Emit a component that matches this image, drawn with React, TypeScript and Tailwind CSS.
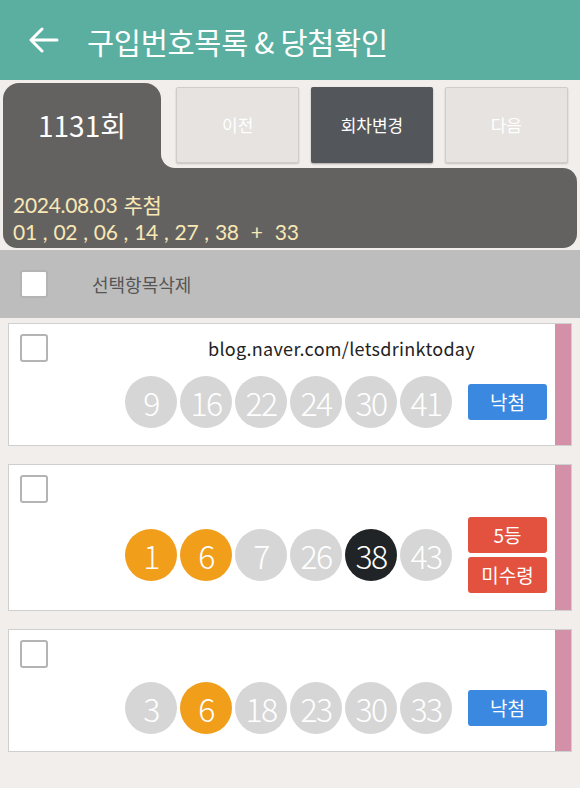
import React from 'react';

type Ball = { n: number; hit?: 'match' | 'bonus' };

interface Ticket {
  url?: string;
  balls: Ball[];
  badges: { label: string; color: 'blue' | 'red' }[];
}

const tickets: Ticket[] = [
  {
    url: 'blog.naver.com/letsdrinktoday',
    balls: [{ n: 9 }, { n: 16 }, { n: 22 }, { n: 24 }, { n: 30 }, { n: 41 }],
    badges: [{ label: '낙첨', color: 'blue' }],
  },
  {
    balls: [{ n: 1, hit: 'match' }, { n: 6, hit: 'match' }, { n: 7 }, { n: 26 }, { n: 38, hit: 'bonus' }, { n: 43 }],
    badges: [
      { label: '5등', color: 'red' },
      { label: '미수령', color: 'red' },
    ],
  },
  {
    balls: [{ n: 3 }, { n: 6, hit: 'match' }, { n: 18 }, { n: 23 }, { n: 30 }, { n: 33 }],
    badges: [{ label: '낙첨', color: 'blue' }],
  },
];

const font = { fontFamily: '"Noto Sans CJK KR", "Noto Sans", sans-serif' };

function Checkbox() {
  return <div className="w-[28px] h-[28px] shrink-0 bg-white border-2 border-[#b4b4b4] rounded-[3px]" />;
}

function LottoBall({ ball }: { ball: Ball }) {
  const color =
    ball.hit === 'match' ? 'bg-[#f19e1b]' : ball.hit === 'bonus' ? 'bg-[#202426]' : 'bg-[#d6d6d6]';
  return (
    <div
      className={`w-[52px] h-[52px] rounded-full ${color} flex items-center justify-center text-white text-[32px] font-light leading-none tracking-[-1.5px]`}
    >
      {ball.n}
    </div>
  );
}

function TicketCard({ ticket }: { ticket: Ticket }) {
  return (
    <div className="flex bg-white border border-[#cfcfcf]">
      <div className="flex-1 pl-[11px] pr-[8px] pt-[10px] pb-[17px]">
        <div className="flex items-center h-[28px]">
          <Checkbox />
          {ticket.url && (
            <span className="ml-[160px] text-[18px] tracking-[0.3px] text-[#222]">{ticket.url}</span>
          )}
        </div>
        <div className="flex items-center justify-end gap-[16px] mt-[14px]">
          <div className="flex gap-[3px]">
            {ticket.balls.map((b, i) => (
              <LottoBall key={i} ball={b} />
            ))}
          </div>
          <div className="flex flex-col gap-[4px]">
            {ticket.badges.map((b) => (
              <div
                key={b.label}
                className={`w-[79px] h-[36px] rounded-[3px] flex items-center justify-center text-white text-[19px] ${
                  b.color === 'blue' ? 'bg-[#3a88e0]' : 'bg-[#e2523f]'
                }`}
              >
                {b.label}
              </div>
            ))}
          </div>
        </div>
      </div>
      <div className="w-[16px] bg-[#d490a8]" />
    </div>
  );
}

export default function App() {
  return (
    <div className="w-[580px] min-h-[788px] bg-[#f1eeeb]" style={font}>
      {/* Header */}
      <div className="h-[80px] bg-[#5aafa0] flex items-center pl-[29px]">
        <svg width="30" height="26" viewBox="0 0 30 26" fill="none" stroke="white" strokeWidth="3" strokeLinecap="round" strokeLinejoin="round">
          <path d="M28 13H3M13 2L2 13l11 11" />
        </svg>
        <h1 className="ml-[28px] text-white text-[29.5px] font-normal tracking-[-0.3px] pt-[2px]">구입번호목록 &amp; 당첨확인</h1>
      </div>

      {/* Round selector */}
      <div className="px-[3px] pt-[3px] pb-[2px]">
        <div className="flex">
          <div className="w-[158px] h-[85px] bg-[#646260] rounded-t-[16px] flex items-center justify-center text-white text-[28px] pb-[2px]">
            1131회
          </div>
          <div className="flex-1 bg-[#646260]">
            <div className="h-full bg-[#f1eeeb] rounded-bl-[14px] flex gap-[12px] pl-[15px] pr-[9px] pt-[4px] pb-[5px]">
              <button className="flex-1 bg-[#e6e3e1] border border-[#d0cdca] shadow-[0_1px_2px_rgba(0,0,0,0.2)] rounded-[2px] text-white text-[17px]">
                이전
              </button>
              <button className="flex-1 bg-[#53565a] shadow-[0_1px_2px_rgba(0,0,0,0.3)] rounded-[2px] text-white text-[17px]">
                회차변경
              </button>
              <button className="flex-1 bg-[#e6e3e1] border border-[#d0cdca] shadow-[0_1px_2px_rgba(0,0,0,0.2)] rounded-[2px] text-white text-[17px]">
                다음
              </button>
            </div>
          </div>
        </div>
        <div
          className="h-[80px] bg-[#646260] rounded-b-[14px] rounded-tr-[14px] px-[10px] pt-[23px] text-[#f8e8b6] text-[21px] leading-[27px] tracking-[-0.3px] [word-spacing:1px]"
          style={{ fontFamily: 'Lato, "Noto Sans CJK KR", sans-serif' }}
        >
          <div>2024.08.03 추첨</div>
          <div>01 , 02 , 06 , 14 , 27 , 38 &nbsp;+ &nbsp;33</div>
        </div>
      </div>

      {/* Delete selected */}
      <div className="h-[68px] bg-[#bdbdbd] flex items-center pl-[20px]">
        <Checkbox />
        <span className="ml-[44px] text-[18px] text-[#555]">선택항목삭제</span>
      </div>

      {/* Tickets */}
      <div className="flex flex-col gap-[18px] px-[8px] pt-[5px]">
        {tickets.map((t, i) => (
          <TicketCard key={i} ticket={t} />
        ))}
      </div>
    </div>
  );
}
